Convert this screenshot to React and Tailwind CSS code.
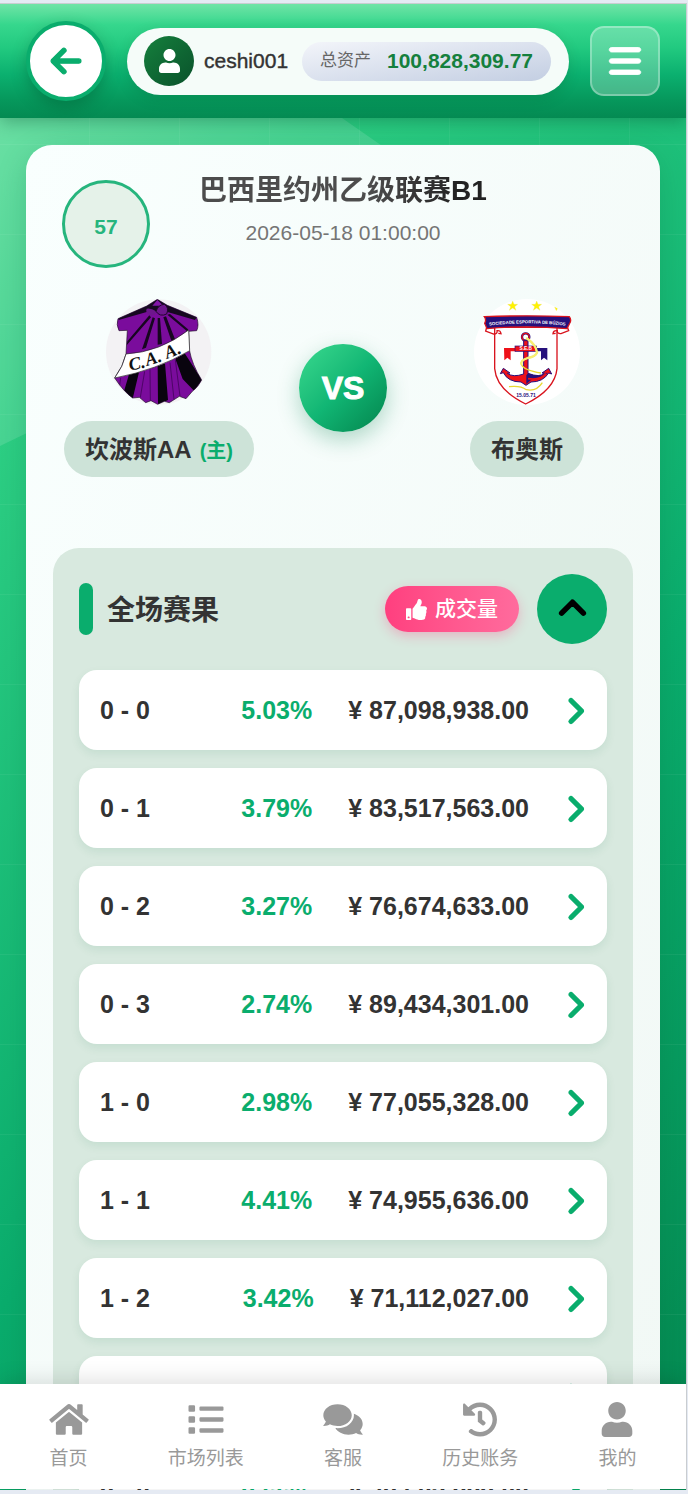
import React from "react";
import { FaUser, FaThumbsUp, FaHome, FaComments, FaHistory, FaList } from "react-icons/fa";
import { FaArrowLeft, FaBars, FaChevronRight, FaChevronUp } from "react-icons/fa6";

const RESULTS = [
  { score: "0 - 0", percent: "5.03%", amount: "87,098,938.00" },
  { score: "0 - 1", percent: "3.79%", amount: "83,517,563.00" },
  { score: "0 - 2", percent: "3.27%", amount: "76,674,633.00" },
  { score: "0 - 3", percent: "2.74%", amount: "89,434,301.00" },
  { score: "1 - 0", percent: "2.98%", amount: "77,055,328.00" },
  { score: "1 - 1", percent: "4.41%", amount: "74,955,636.00" },
  { score: "1 - 2", percent: "3.42%", amount: "71,112,027.00" },
  { score: "1 - 3", percent: "3.18%", amount: "80,346,215.00" },
  { score: "2 - 0", percent: "2.66%", amount: "78,503,882.00" },
];

const TABS = [
  { label: "首页", icon: FaHome },
  { label: "市场列表", icon: FaList },
  { label: "客服", icon: FaComments },
  { label: "历史账务", icon: FaHistory },
  { label: "我的", icon: FaUser },
];

function Backdrop() {
  return (
    <>
      <svg className="absolute left-0 top-0 h-[452px] w-[480px]" viewBox="0 0 480 452" aria-hidden="true">
        <path d="M0 0H178L480 210L0 442Z" fill="#fff" fillOpacity="0.13" />
      </svg>
      <div className="absolute inset-0 bg-[linear-gradient(#ffffff0d_1px,transparent_1px),linear-gradient(90deg,#ffffff0d_1px,transparent_1px)] bg-[size:90px_90px] bg-[position:-1px_50px]" />
    </>
  );
}

function Header() {
  return (
    <header className="relative z-10 flex h-[114px] shrink-0 items-center gap-[21px] bg-[linear-gradient(180deg,#70e4a6_0%,#36d78d_18%,#22ca80_38%,#0bb06f_62%,#06985c_84%,#048a52_100%)] px-[26px] shadow-[0_4px_16px_rgba(0,70,40,0.35)]">
      <button
        aria-label="返回"
        className="flex size-20 shrink-0 items-center justify-center rounded-full border-4 border-[#0aad6d] bg-white text-[#0aad6d] shadow-[0_6px_16px_rgba(0,60,30,0.3)]"
      >
        <FaArrowLeft className="size-[34px] [stroke-width:20]" />
      </button>

      <div className="flex h-[67px] min-w-0 flex-1 items-center rounded-full bg-[#f5fcf9] pl-[17px] pr-[18px] shadow-[0_4px_14px_rgba(0,60,30,0.15)]">
        <span className="flex size-[50px] shrink-0 items-center justify-center rounded-full bg-linear-to-br from-[#15803d] to-[#0a522b] text-white">
          <FaUser className="h-[24px] w-[21px]" />
        </span>
        <span className="ml-2.5 text-[21px] font-medium text-[#333] [-webkit-text-stroke:0.4px_#333]">ceshi001</span>
        <div className="ml-auto flex h-[39px] items-center gap-4 rounded-full bg-linear-to-br from-[#f3f5fa] to-[#c3cee2] px-[18px]">
          <span className="text-[17px] text-[#666]">总资产</span>
          <span className="text-[21px] font-bold text-[#15803d]">100,828,309.77</span>
        </div>
      </div>

      <button
        aria-label="菜单"
        className="flex size-[70px] shrink-0 items-center justify-center rounded-[14px] border-2 border-white/30 bg-white/25 text-white"
      >
        <FaBars className="size-9 [stroke-width:12]" />
      </button>
    </header>
  );
}

function CamposCrest() {
  return (
    <svg viewBox="168 53 318 318" className="size-[106px]" role="img" aria-label="坎波斯AA">
      <defs>
        <clipPath id="cape">
          <path d="M322 54L352 72L440 108Q448 132 440 148L416 150L418 205Q426 250 455 296Q444 318 427 330L408 352L388 345L358 364L343 360L323 369L303 358L287 364L268 348L248 350Q222 332 194 290Q220 255 228 218L232 147L207 148Q198 130 204 112L290 74Z" />
        </clipPath>
      </defs>
      <circle cx="326" cy="212" r="158" fill="#f3f2f4" />
      <g clipPath="url(#cape)">
        <rect x="190" y="50" width="270" height="322" fill="#7a0c9c" />
        <path d="M322 54L352 72L440 108L435 116L355 93L290 92L206 116L206 108L290 74Z" fill="#160820" />
        <path d="M322 56L340 73L307 73Z" fill="#8216a8" />
        <path d="M290 82Q284 96 304 103Q321 100 318 90Q305 80 290 82Z" fill="#6e168d" />
        <path d="M318 90Q325 70 343 69Q358 78 350 98Q330 108 318 90Z" fill="#6e168d" stroke="#21082c" strokeWidth="3" />
        <path d="M298 102L232 180L230 192L303 108ZM308 108L276 204L288 199L315 111ZM323 110L323 190L336 188L330 110ZM340 108L364 178L375 174L348 105ZM352 100L414 152L414 144L360 98Z" fill="#170620" />
        <path d="M238 276L222 330L248 352L268 268ZM323 255L324 370L354 356L345 246ZM376 232L398 293L432 328L456 296L404 216Z" fill="#09040e" />
        <path d="M300 264L301 357M360 244L372 354M376 236L390 344M284 270L271 348M212 290L208 318" stroke="#4d0667" strokeWidth="3" />
      </g>
      <path d="M322 54L352 72L440 108Q448 132 440 148L416 150L418 205Q426 250 455 296Q444 318 427 330L408 352L388 345L358 364L343 360L323 369L303 358L287 364L268 348L248 350Q222 332 194 290Q220 255 228 218L232 147L207 148Q198 130 204 112L290 74Z" fill="none" stroke="#21122b" strokeWidth="2" />
      <path d="M228 218Q330 212 416 146L419 208Q320 266 194 290Q220 255 228 218Z" fill="#fff" stroke="#222" strokeWidth="2" />
      <g fontFamily="'Liberation Serif', serif" fontStyle="italic" fontWeight="bold" fontSize="54" fill="#111">
        <text transform="translate(240 268) rotate(-12)">C.</text>
        <text transform="translate(291 254) rotate(-17)">A.</text>
        <text transform="translate(351 233) rotate(-22)">A.</text>
      </g>
    </svg>
  );
}

function BuziosCrest() {
  return (
    <svg viewBox="105 53 318 318" className="size-[106px]" role="img" aria-label="布奥斯">
      <defs>
        <clipPath id="buzios">
          <circle cx="264" cy="212" r="159" />
        </clipPath>
        <path id="ribbon" d="M140 134Q264 118 390 134" />
      </defs>
      <circle cx="264" cy="212" r="159" fill="#fff" />
      <g fill="#fff200" stroke="#e9e36a" clipPath="url(#buzios)">
        <path d="M221 59L225 69L236 69L227 76L231 87L221 80L211 87L215 76L206 69L217 69Z" />
        <path d="M293 59L297 69L308 69L299 76L303 87L293 80L283 87L287 76L278 69L289 69Z" />
        <path d="M347 77L357 79L352 88Z" />
      </g>
      <path d="M167 138V262Q172 325 260 368Q348 325 354 262V138Z" fill="#fff" stroke="#d9141e" strokeWidth="4" />
      <path d="M144 134L140 149L164 158Q176 158 174 148Q184 146 186 157L178 156M384 134L389 148L366 157Q354 158 355 148Q343 146 342 157L350 156" fill="none" stroke="#d9141e" strokeWidth="4" />
      <path d="M136 106Q264 101 391 106Q399 116 391 128L384 142Q264 131 144 142L137 126Q143 116 136 106Z" fill="#26107c" stroke="#d9141e" strokeWidth="4" />
      <text fontFamily="'Liberation Sans', sans-serif" fontWeight="bold" fontSize="13" fill="#fff">
        <textPath href="#ribbon" startOffset="50%" textAnchor="middle">SOCIEDADE ESPORTIVA DE BÚZIOS</textPath>
      </text>
      <path d="M195 200H231V210H215V237L205 229L196 237Z" fill="#ee1119" />
      <path d="M325 200H291V210H306V237L315 229L325 237Z" fill="#26107c" />
      <circle cx="260" cy="167" r="11" fill="none" stroke="#26107c" strokeWidth="7" />
      <circle cx="260" cy="167" r="11" fill="none" stroke="#ee1119" strokeWidth="4" />
      <path d="M254 178H267V276Q304 290 316 275L309 275L329 261L338 278L329 275Q312 302 276 302L261 312L246 302Q207 302 193 274L184 277L193 261L213 275L205 276Q222 289 254 278Z" fill="#ee1119" stroke="#26107c" strokeWidth="3" />
      <path d="M262 282L267 276Q304 290 320 274L326 275Q310 295 276 296L262 308Z" fill="#26107c" />
      <path d="M267 292Q304 298 322 277" fill="none" stroke="#ee1119" strokeWidth="5" />
      <rect x="228" y="194" width="64" height="16" fill="#ee1119" stroke="#26107c" strokeWidth="2" />
      <text x="260" y="207" textAnchor="middle" fontFamily="'Liberation Sans', sans-serif" fontWeight="bold" fontSize="14" fill="#fff">S.E.B</text>
      <path d="M262 170Q292 190 294 214Q290 226 266 230Q242 238 248 250Q254 266 306 275M210 316Q244 312 262 325Q292 332 310 304" fill="none" stroke="#e9d832" strokeWidth="4" />
      <path d="M262 170Q292 190 294 214Q290 226 266 230Q242 238 248 250" fill="none" stroke="#f8ef73" strokeWidth="7" />
      <text x="261" y="348" textAnchor="middle" fontFamily="'Liberation Sans', sans-serif" fontWeight="bold" fontSize="15" fill="#26107c">15.05.71</text>
    </svg>
  );
}

function Team({ name, home, children }) {
  return (
    <div className="flex min-w-0 flex-1 flex-col items-center gap-4">
      {children}
      <div className="flex h-14 items-center gap-2 whitespace-nowrap rounded-full bg-[#cde3d8] px-[21px] pt-0.5 text-[24px] font-bold text-[#333]">
        {name}
        {home && <span className="pt-0.5 text-[20px] text-[#0aad6d]">(主)</span>}
      </div>
    </div>
  );
}

function ResultRow({ score, percent, amount }) {
  return (
    <li>
      <button className="grid h-20 w-full grid-cols-[1fr_auto_auto_auto] items-center gap-x-9 rounded-[18px] bg-white pl-[21px] pr-[23px] pt-0.5 text-left text-[25px] font-bold text-[#333] shadow-[0_4px_10px_rgba(10,110,70,0.09)]">
        <span>{score}</span>
        <span className="text-[#0aad6d]">{percent}</span>
        <span>¥ {amount}</span>
        <FaChevronRight className="h-[28px] w-[19px] overflow-visible text-[#0aad6d] [stroke-width:32]" />
      </button>
    </li>
  );
}

function ResultsPanel() {
  return (
    <section className="mt-[71px] rounded-[26px] bg-[#d8e9df] p-[26px]">
      <div className="mb-[26px] flex items-center">
        <span className="h-[52px] w-3.5 rounded-full bg-[#0aad6d]" />
        <h2 className="ml-3.5 pt-1 text-[28px] font-bold text-[#333]">全场赛果</h2>
        <button className="ml-auto flex h-[46px] items-center gap-2 rounded-full bg-linear-to-r from-[#ff3f7f] to-[#ff6b9d] px-[21px] text-[21px] font-medium text-white shadow-[0_4px_12px_rgba(255,64,129,0.3)]">
          <FaThumbsUp className="size-[21px]" />
          成交量
        </button>
        <button aria-label="收起" className="ml-[18px] flex size-[70px] items-center justify-center rounded-full bg-[#0aad6d] text-black">
          <FaChevronUp className="size-[29px] overflow-visible [stroke-width:32]" />
        </button>
      </div>
      <ul className="flex flex-col gap-[18px]">
        {RESULTS.map((row) => (
          <ResultRow key={row.score} {...row} />
        ))}
      </ul>
    </section>
  );
}

function TabBar() {
  return (
    <nav className="absolute inset-x-0 bottom-px z-10 flex h-[105px] bg-white shadow-[0_-4px_20px_rgba(0,0,0,0.12)]">
      {TABS.map(({ label, icon: Icon }) => (
        <a key={label} href="#" className="flex flex-1 flex-col items-center gap-2 pt-[18px] text-[19px] leading-7 text-[#999]">
          <Icon className="h-[35px] w-10" />
          {label}
        </a>
      ))}
    </nav>
  );
}

export default function App() {
  return (
    <div className="h-screen bg-[#e5eaf3] pb-1 pr-px pt-[3px] font-['Liberation_Sans','Noto_Sans_CJK_SC',sans-serif]">
      <div className="relative flex h-full flex-col overflow-hidden border-r border-t border-[#c9cdd0] bg-[linear-gradient(135deg,#62df9d_0%,#2dcf84_20%,#0aad6d_60%,#048850_100%)]">
        <Backdrop />
        <Header />
        <main className="relative min-h-0 flex-1 overflow-y-auto px-[26px] pt-[27px] [scrollbar-width:none]">
          <article className="rounded-[26px] bg-linear-to-br from-[#f9fffe] to-[#f1f8f5] px-[27px] pb-[26px] pt-7 shadow-[0_8px_30px_rgba(0,90,50,0.2)]">
            <div className="flex px-[9px]">
              <div className="mt-[7px] flex size-[88px] shrink-0 items-center justify-center rounded-full border-3 border-[#26b57d] bg-[#e5f2e9] pt-1.5 text-[21px] font-bold text-[#26b57d]">
                57
              </div>
              <div className="mr-[88px] flex flex-1 flex-col items-center gap-2.5">
                <h1 className="bg-linear-to-r from-[#4c4c4c] from-60% to-[#222] to-90% bg-clip-text text-[28px] font-bold leading-9 text-transparent">
                  巴西里约州乙级联赛B1
                </h1>
                <time className="text-[21px] leading-7 text-[#757575]">2026-05-18 01:00:00</time>
              </div>
            </div>

            <div className="mt-[31px] flex items-center gap-[34px]">
              <Team name="坎波斯AA" home>
                <CamposCrest />
              </Team>
              <div className="flex size-[88px] shrink-0 items-center justify-center rounded-full bg-linear-to-br from-[#38da8f] via-[#11b674] to-[#04844d] text-[32px] font-black text-white shadow-[0_8px_22px_rgba(5,130,80,0.3)] [-webkit-text-stroke:1px_#fff]">
                VS
              </div>
              <Team name="布奥斯">
                <BuziosCrest />
              </Team>
            </div>

            <ResultsPanel />
          </article>
        </main>
        <TabBar />
      </div>
    </div>
  );
}
